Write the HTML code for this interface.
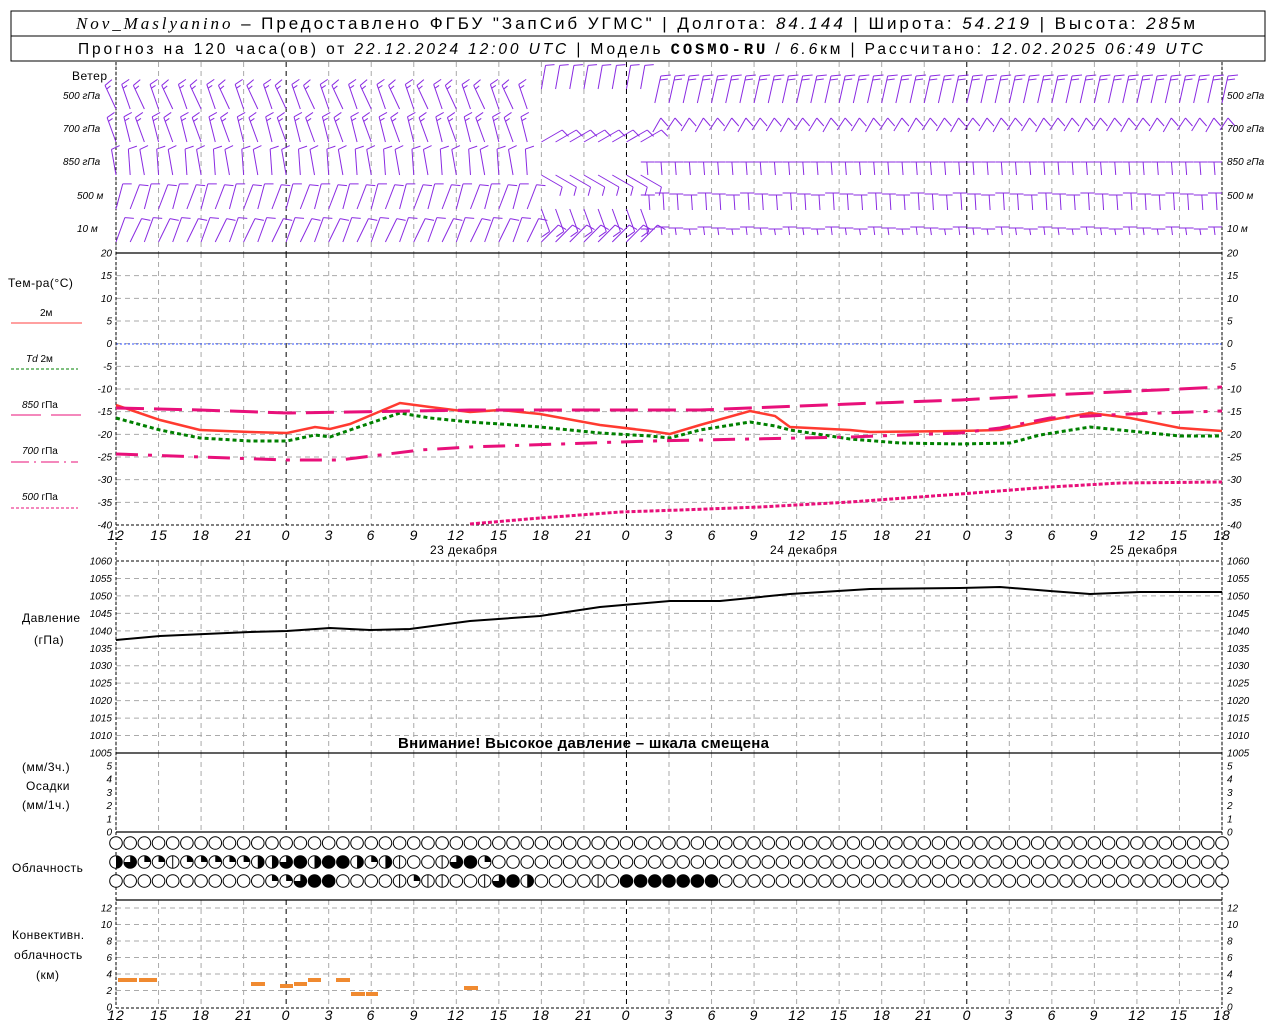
<!DOCTYPE html>
<html><head><meta charset="utf-8">
<style>
html,body{margin:0;padding:0;background:#fff;width:1280px;height:1024px;overflow:hidden}
svg{display:block}
text{font-family:"Liberation Sans",sans-serif;fill:#000}
.ax{font-size:10px;font-style:italic}
.tl{font-size:14px;font-style:italic;letter-spacing:1px}
.lb{font-size:12px;letter-spacing:0.5px}
</style></head><body>
<svg id="s" width="1280" height="1024" xmlns="http://www.w3.org/2000/svg">
<rect x="11" y="11" width="1254" height="50" fill="none" stroke="#000" stroke-width="1"/>
<line x1="11" y1="36" x2="1265" y2="36" stroke="#000"/>
<text x="76" y="29" textLength="1119" lengthAdjust="spacing" style="font-size:17px"><tspan style="font-family:'Liberation Serif',serif;font-style:italic">Nov_Maslyanino</tspan> – Предоставлено ФГБУ "ЗапСиб УГМС" | Долгота: <tspan font-style="italic">84.144</tspan> | Широта: <tspan font-style="italic">54.219</tspan> | Высота: <tspan font-style="italic">285</tspan>м</text>
<text x="78" y="54" textLength="1125" lengthAdjust="spacing" style="font-size:15.5px">Прогноз на 120 часа(ов) от <tspan font-style="italic">22.12.2024 12:00 UTC</tspan>  | Модель <tspan style="font-family:'Liberation Mono',monospace;font-weight:bold">COSMO-RU</tspan> / <tspan font-style="italic">6.6</tspan>км | Рассчитано: <tspan font-style="italic">12.02.2025 06:49 UTC</tspan></text>
<g id="grid"></g>
<g id="data"></g>
<text x="72" y="80" class="lb">Ветер</text>
<g class="ax" style="font-size:10px">
<text x="63" y="99">500 гПа</text>
<text x="63" y="132">700 гПа</text>
<text x="63" y="165">850 гПа</text>
<text x="77" y="199">500 м</text>
<text x="77" y="232">10  м</text>
<text x="1227" y="99">500 гПа</text>
<text x="1227" y="132">700 гПа</text>
<text x="1227" y="165">850 гПа</text>
<text x="1227" y="199">500 м</text>
<text x="1227" y="232">10  м</text>
</g>
<text x="8" y="287" class="lb">Тем-ра(°C)</text>
<text x="40" y="316" class="ax" style="font-style:normal">2м</text>
<line x1="11" y1="323" x2="82" y2="323" stroke="#ff4040"/>
<text x="26" y="362" class="ax">Td  <tspan font-style="normal">2м</tspan></text>
<line x1="11" y1="369" x2="78" y2="369" stroke="#008000" stroke-dasharray="3,2"/>
<text x="22" y="408" class="ax">850 <tspan font-style="normal">гПа</tspan></text>
<line x1="11" y1="415" x2="82" y2="415" stroke="#e8107a" stroke-dasharray="30,10"/>
<text x="22" y="454" class="ax">700 <tspan font-style="normal">гПа</tspan></text>
<line x1="11" y1="462" x2="78" y2="462" stroke="#e8107a" stroke-dasharray="18,5,2,5"/>
<text x="22" y="500" class="ax">500 <tspan font-style="normal">гПа</tspan></text>
<line x1="11" y1="508" x2="78" y2="508" stroke="#e8107a" stroke-dasharray="3,2"/>
<text x="22" y="622" class="lb">Давление</text>
<text x="34" y="644" class="lb">(гПа)</text>
<text x="22" y="771" class="lb">(мм/3ч.)</text>
<text x="26" y="790" class="lb">Осадки</text>
<text x="22" y="809" class="lb">(мм/1ч.)</text>
<text x="12" y="872" class="lb">Облачность</text>
<text x="12" y="939" class="lb">Конвективн.</text>
<text x="14" y="959" class="lb">облачность</text>
<text x="36" y="979" class="lb">(км)</text>
<text x="398" y="748" style="font-size:15px;font-weight:bold;letter-spacing:0.3px">Внимание! Высокое давление – шкала смещена</text>
<text x="430" y="554" class="lb">23 декабря</text>
<text x="770" y="554" class="lb">24 декабря</text>
<text x="1110" y="554" class="lb">25 декабря</text>
<g class="tl" text-anchor="middle">
<text x="116" y="540">12</text><text x="159" y="540">15</text><text x="201" y="540">18</text><text x="244" y="540">21</text><text x="286" y="540">0</text><text x="329" y="540">3</text><text x="371" y="540">6</text><text x="414" y="540">9</text><text x="456" y="540">12</text><text x="499" y="540">15</text><text x="541" y="540">18</text><text x="584" y="540">21</text><text x="626" y="540">0</text><text x="669" y="540">3</text><text x="712" y="540">6</text><text x="754" y="540">9</text><text x="797" y="540">12</text><text x="839" y="540">15</text><text x="882" y="540">18</text><text x="924" y="540">21</text><text x="967" y="540">0</text><text x="1009" y="540">3</text><text x="1052" y="540">6</text><text x="1094" y="540">9</text><text x="1137" y="540">12</text><text x="1179" y="540">15</text><text x="1222" y="540">18</text>
<text x="116" y="1020">12</text><text x="159" y="1020">15</text><text x="201" y="1020">18</text><text x="244" y="1020">21</text><text x="286" y="1020">0</text><text x="329" y="1020">3</text><text x="371" y="1020">6</text><text x="414" y="1020">9</text><text x="456" y="1020">12</text><text x="499" y="1020">15</text><text x="541" y="1020">18</text><text x="584" y="1020">21</text><text x="626" y="1020">0</text><text x="669" y="1020">3</text><text x="712" y="1020">6</text><text x="754" y="1020">9</text><text x="797" y="1020">12</text><text x="839" y="1020">15</text><text x="882" y="1020">18</text><text x="924" y="1020">21</text><text x="967" y="1020">0</text><text x="1009" y="1020">3</text><text x="1052" y="1020">6</text><text x="1094" y="1020">9</text><text x="1137" y="1020">12</text><text x="1179" y="1020">15</text><text x="1222" y="1020">18</text>
</g>
<g id="ylab" class="ax"></g>
</svg>
<script>
var S='http://www.w3.org/2000/svg',G=document.getElementById('grid'),D=document.getElementById('data'),YL=document.getElementById('ylab');
function el(p,t,a){var e=document.createElementNS(S,t);for(var k in a)e.setAttribute(k,a[k]);p.appendChild(e);return e;}
function ln(p,x1,y1,x2,y2,c,w,d){var a={x1:x1,y1:y1,x2:x2,y2:y2,stroke:c,'stroke-width':w||1};if(d)a['stroke-dasharray']=d;return el(p,'line',a);}
var L=116,R=1222,px=(R-L)/78;
function X(h){return L+h*px;}
var panels=[[62,253],[253,525],[561,753],[753,832],[900,1008]];
panels.forEach(function(p){
 for(var i=0;i<=26;i++){var x=X(i*3);var mid=(i%8==4);
  ln(G,x,p[0],x,p[1],mid?'#000':'#aaa',1,'5,4');}
});
for(var v=-40;v<=20;v+=5){var y=253+(20-v)*272/60;if(v>-40&&v<20)ln(G,L,y,R,y,'#aaa',1,'5,4');
 var t=el(YL,'text',{x:112,y:y+3.5,'text-anchor':'end'});t.textContent=v;
 var t2=el(YL,'text',{x:1227,y:y+3.5});t2.textContent=v;}
ln(G,L,344,R,344,'#3050ff',1,'2,2');
for(var v=1005;v<=1060;v+=5){var y=753-(v-1005)*192/55;if(v<1060&&v>1005)ln(G,L,y,R,y,'#aaa',1,'5,4');
 var t=el(YL,'text',{x:112,y:y+3.5,'text-anchor':'end'});t.textContent=v;
 var t2=el(YL,'text',{x:1227,y:y+3.5});t2.textContent=v;}
for(var v=0;v<=5;v++){var y=832-v*13.2;
 var t=el(YL,'text',{x:112,y:y+3.5,'text-anchor':'end'});t.textContent=v;
 var t2=el(YL,'text',{x:1227,y:y+3.5});t2.textContent=v;}
for(var v=0;v<=12;v+=2){var y=1007-v*8.25;if(v>0)ln(G,L,y,R,y,'#aaa',1,'5,4');
 var t=el(YL,'text',{x:112,y:y+3.5,'text-anchor':'end'});t.textContent=v;
 var t2=el(YL,'text',{x:1227,y:y+3.5});t2.textContent=v;}
ln(G,L,62,L,1008,'#000',1,'3,2');ln(G,R,62,R,1008,'#000',1,'3,2');
ln(G,L,253,R,253,'#000',1.2);ln(G,L,525,R,525,'#000',1,'3,2');ln(G,L,561,R,561,'#000',1,'3,2');
ln(G,L,753,R,753,'#000',1.2);ln(G,L,832,R,832,'#000',1.2);ln(G,L,900,R,900,'#000',1.2);ln(G,L,1008,R,1008,'#000',1,'3,2');
function pl(pts,c,w,d){var s=pts.map(function(p){return p[0]+','+p[1]}).join(' ');var a={points:s,fill:'none',stroke:c,'stroke-width':w};if(d)a['stroke-dasharray']=d;el(D,'polyline',a);}
pl([[116,405],[160,420],[200,430],[250,432],[287,433],[315,427],[330,429],[350,424],[400,403],[430,407],[470,412],[500,410],[540,414],[600,425],[650,431],[670,434],[700,425],[750,411],[775,416],[790,427],[850,430],[870,432],[960,431],[1000,430],[1050,420],[1090,413],[1130,418],[1180,428],[1222,431]],'#ff3a30',2.5);
pl([[116,418],[160,430],[200,438],[250,441],[287,441],[315,435],[330,437],[350,430],[400,413],[430,418],[470,422],[500,424],[540,427],[600,433],[650,436],[670,438],[700,430],[750,422],[775,426],[790,430],[850,439],[900,443],[960,444],[1010,443],[1040,435],[1090,427],[1130,431],[1180,436],[1222,436]],'#008000',3,'4,3');
pl([[116,408],[200,410],[287,413],[470,410],[700,410],[850,404],[960,400],[1050,395],[1222,387]],'#e8107a',3,'28,10');
pl([[116,454],[287,460],[340,460],[420,450],[470,447],[650,441],[850,437],[960,433],[1000,428],[1050,418],[1130,414],[1222,411]],'#e8107a',3,'22,10,4,10');
pl([[470,524],[540,518],[620,512],[680,510],[760,507],[850,502],[960,494],[1050,487],[1120,483],[1222,482]],'#e8107a',3,'4,2');
pl([[116,640],[160,636],[250,632],[287,631],[330,628],[370,630],[410,629],[470,621],[540,616],[600,607],[670,601],[720,601],[790,594],[870,589],[960,588],[1000,587],[1050,591],[1090,594],[1140,592],[1222,592]],'#000',2);
[[118,137,980],[139,157,980],[251,265,984],[280,293,986],[294,307,984],[308,321,980],[336,350,980],[351,365,994],[366,378,994],[464,478,988]].forEach(function(b){el(D,'rect',{x:b[0],y:b[2]-2,width:b[1]-b[0],height:4,fill:'#f08a30'});});
// wind barbs
var C='#8a2be2';
function W(x1,y1,x2,y2){ln(D,x1,y1,x2,y2,C,1);}
function barb(x,y,ang,len,nb){var r=ang*Math.PI/180;var ex=x+Math.sin(r)*len,ey=y-Math.cos(r)*len;W(x,y,ex,ey);
 for(var k=0;k<nb;k++){var bx=x+Math.sin(r)*(len-k*4),by=y-Math.cos(r)*(len-k*4);var br=r+Math.PI/2.4;var bl=k==nb-1&&nb>1?5:9;W(bx,by,bx+Math.sin(br)*bl,by-Math.cos(br)*bl);}}
var rows=[95,128,161,195,228];
for(var h=0;h<=78;h++){var x=X(h);
 if(h<30){
  for(var ri=0;ri<5;ri++){var ang=[-25,-20,-10,15,20][ri]+(h%2)*6;barb(x,rows[ri]+14,ang,26,ri<2?2:1);}
 } else if(h<38){
  [[10,1],[60,1],[120,1],[160,1],[45,1]].forEach(function(a,ri){barb(x,rows[ri]+(ri==0?-6:14),a[0],24,a[1]);});
 } else {
  var j=(h%3)-1;
  // 500 hPa: slanted staffs with flags at top
  W(x,103,x+6,76);W(x+6,76,x+16,75);W(x+5,80,x+13,79);
  // 700 hPa zigzag
  W(x-2,131+j,x+6,118);W(x+6,118,x+13,126);
  // 850 hPa horizontal with tick down
  W(x-14,162,x,162);W(x-8,162,x-7,175);
  // 500 m
  W(x-14,194+j,x,194+j);W(x-6,194+j,x-5,210);
  // 10 m
  W(x-14,228+j,x,228+j);W(x-8,228+j,x-7,235);
 }
}
// clouds
var r2='h3qqvqqqqqhh3FhFFhqhvoov3Fq',r3='oooooooooooqq3FFoooovqvvoov3Fhoooov';
function circ(x,y,t){var rr=6.3;el(D,'circle',{cx:x,cy:y,r:rr,fill:t=='F'?'#000':'#fff',stroke:'#000','stroke-width':1});
 if(t=='q')el(D,'path',{d:'M'+x+','+y+' L'+x+','+(y-rr)+' A'+rr+','+rr+' 0 0 1 '+(x+rr)+','+y+' Z',fill:'#000'});
 if(t=='3')el(D,'path',{d:'M'+x+','+y+' L'+x+','+(y-rr)+' A'+rr+','+rr+' 0 1 1 '+(x-rr)+','+y+' Z',fill:'#000'});
 if(t=='h')el(D,'path',{d:'M'+x+','+(y-rr)+' A'+rr+','+rr+' 0 0 1 '+x+','+(y+rr)+' Z',fill:'#000'});
 if(t=='v')ln(D,x,y-rr,x,y+rr,'#000',1);}
for(var i=0;i<79;i++){var x=X(i);circ(x,843,'o');circ(x,862,r2[i]||'o');var t3=r3[i]||'o';if(i>=36&&i<=42)t3='F';circ(x,881,t3);}
</script>
</body></html>
